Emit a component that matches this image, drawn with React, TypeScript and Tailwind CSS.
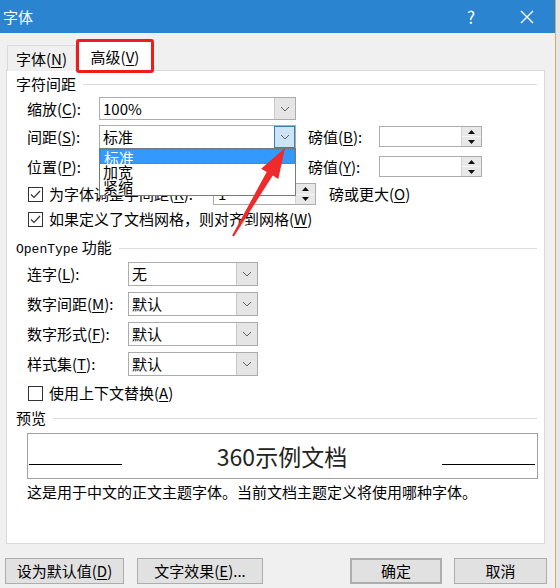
import React from "react";

const FONT = "font-['Noto_Sans_CJK_SC','Noto_Sans',sans-serif]";

function K({ k }: { k: string }) {
  return <span className="underline underline-offset-2">{k}</span>;
}

function Chevron() {
  return (
    <svg width="10" height="6" viewBox="0 0 10 6">
      <polyline points="1,1 5,5 9,1" fill="none" stroke="#606060" strokeWidth="1" />
    </svg>
  );
}

function Combo({ value, className, focus }: { value: string; className: string; focus?: boolean }) {
  return (
    <div className={`flex border border-[#acacac] bg-white ${className}`}>
      <span className="flex-1 pl-[3px] leading-[21px]">{value}</span>
      {focus ? (
        <span className="flex w-[21px] items-center justify-center border border-[#3c7fb1] bg-[#cce4f7]">
          <Chevron />
        </span>
      ) : (
        <span className="flex w-[21px] items-center justify-center border-l border-[#c8c8c8] bg-[#e5e5e5]">
          <Chevron />
        </span>
      )}
    </div>
  );
}

function Spin({ value, className }: { value?: string; className: string }) {
  return (
    <div className={`flex border border-[#acacac] bg-white ${className}`}>
      <span className="flex-1 pl-[4px] leading-[20px]">{value}</span>
      <span className="flex w-[20px] flex-col border-l border-[#d4d4d4] bg-[#e8e8e8]">
        <span className="flex flex-1 items-center justify-center border-b border-[#f8f8f8]">
          <svg width="7" height="4" viewBox="0 0 7 4">
            <polygon points="0,4 3.5,0 7,4" fill="#111" />
          </svg>
        </span>
        <span className="flex flex-1 items-center justify-center">
          <svg width="7" height="4" viewBox="0 0 7 4">
            <polygon points="0,0 7,0 3.5,4" fill="#111" />
          </svg>
        </span>
      </span>
    </div>
  );
}

function Check({ checked }: { checked?: boolean }) {
  return (
    <span className="flex h-[15px] w-[15px] shrink-0 items-center justify-center border border-[#333] bg-white">
      {checked && (
        <svg width="11" height="9" viewBox="0 0 11 9">
          <polyline points="1,4.5 4,7.5 10,1" fill="none" stroke="#333" strokeWidth="1.2" />
        </svg>
      )}
    </span>
  );
}

function Section({ children, className }: { children: React.ReactNode; className: string }) {
  return (
    <div className={`flex h-[20px] items-center pl-[9px] pr-[7px] ${className}`}>
      <span>{children}</span>
      <span className="ml-[7px] h-px flex-1 bg-[#dcdcdc]" />
    </div>
  );
}

function Button({ children, className }: { children: React.ReactNode; className: string }) {
  return (
    <div className={`flex items-center justify-center border border-[#adadad] bg-[#e1e1e1] ${className}`}>
      {children}
    </div>
  );
}

export default function App() {
  return (
    <div className={`relative flex h-[588px] w-[560px] overflow-hidden bg-[#e6e6e6] text-[15px] leading-[20px] text-black ${FONT}`}>
      <div className="h-full w-[556px] border-r border-[#d9aa6a] bg-[#f0f0f0]">
        {/* title bar */}
        <div className="flex h-[33px] items-center bg-[#2b84d0] pl-[3px] pr-[21px] text-white">
          <span>字体</span>
          <span className="ml-auto w-[20px] text-center text-[17px]">?</span>
          <svg className="ml-[39px]" width="14" height="14" viewBox="0 0 14 14">
            <path d="M1 1 L13 13 M13 1 L1 13" stroke="#fff" strokeWidth="1.4" />
          </svg>
        </div>

        {/* tabs */}
        <div className="flex h-[37px] items-end pl-[7px]">
          <div className="-mb-px flex h-[26px] w-[69px] items-center justify-center border border-b-0 border-[#dadada] bg-[#f0f0f0]">
            字体(<K k="N" />)
          </div>
          <div className="relative z-10 -mb-px flex h-[32px] w-[78px] items-center justify-center border border-b-0 border-[#d9d9d9] bg-white pt-[2px]">
            高级(<K k="V" />)
          </div>
        </div>

        {/* panel */}
        <div className="ml-[6px] h-[474px] w-[539px] border border-[#d9d9d9] bg-white pt-[3px]">
          <Section className="">字符间距</Section>

          <div className="mt-[3px] flex h-[23px] items-center pl-[20px]">
            <span className="w-[72px]">缩放(<K k="C" />):</span>
            <Combo value="100%" className="h-[23px] w-[197px]" />
          </div>
          <div className="mt-[5px] flex h-[23px] items-center pl-[20px]">
            <span className="w-[72px]">间距(<K k="S" />):</span>
            <Combo value="标准" focus className="h-[24px] w-[197px]" />
            <span className="ml-[12px] w-[71px]">磅值(<K k="B" />):</span>
            <Spin className="h-[21px] w-[103px]" />
          </div>
          <div className="mt-[7px] flex h-[23px] items-center pl-[20px]">
            <span className="w-[72px]">位置(<K k="P" />):</span>
            <Combo value="标准" className="h-[23px] w-[197px]" />
            <span className="ml-[12px] w-[71px]">磅值(<K k="Y" />):</span>
            <Spin className="h-[21px] w-[103px]" />
          </div>

          <div className="mt-[5px] flex h-[22px] items-center pl-[21px]">
            <Check checked />
            <span className="ml-[6px] w-[164px]">为字体调整字间距(<K k="K" />):</span>
            <Spin value="1" className="h-[22px] w-[103px]" />
            <span className="ml-[13px]">磅或更大(<K k="O" />)</span>
          </div>
          <div className="mt-[3px] flex h-[22px] items-center pl-[21px]">
            <Check checked />
            <span className="ml-[6px]">如果定义了文档网格，则对齐到网格(<K k="W" />)</span>
          </div>

          <Section className="mt-[8px]">
            <span className="font-['Liberation_Mono',monospace] text-[13px]">OpenType</span> 功能
          </Section>

          {[
            ["连字", "L", "无", "mt-[4px]"],
            ["数字间距", "M", "默认", "mt-[6px]"],
            ["数字形式", "F", "默认", "mt-[6px]"],
            ["样式集", "T", "默认", "mt-[6px]"],
          ].map(([label, key, value, mt]) => (
            <div key={key} className={`flex h-[24px] items-center pl-[20px] ${mt}`}>
              <span className="w-[101px]">
                {label}(<K k={key} />):
              </span>
              <Combo value={value} className="h-[24px] w-[130px]" />
            </div>
          ))}

          <div className="mt-[7px] flex h-[20px] items-center pl-[21px]">
            <Check />
            <span className="ml-[6px]">使用上下文替换(<K k="A" />)</span>
          </div>

          <Section className="mt-[5px]">预览</Section>

          <div className="ml-[20px] mt-[5px] flex h-[46px] w-[511px] items-start border border-[#a0a0a0]">
            <span className="ml-[1px] mt-[30px] h-px w-[93px] bg-black" />
            <span className="flex-1 text-center text-[23px] leading-[44px] text-[#222]">360示例文档</span>
            <span className="mr-[2px] mt-[30px] h-px w-[93px] bg-black" />
          </div>
          <div className="ml-[20px] mt-[3px]">这是用于中文的正文主题字体。当前文档主题定义将使用哪种字体。</div>
        </div>

        {/* buttons */}
        <div className="mt-[14px] flex h-[26px]">
          <Button className="ml-[5px] w-[119px]">
            设为默认值(<K k="D" />)
          </Button>
          <Button className="ml-[13px] w-[126px]">
            文字效果(<K k="E" />)...
          </Button>
          <Button className="ml-[87px] w-[92px] border-2 border-[#0078d7]">确定</Button>
          <Button className="ml-[12px] w-[93px]">取消</Button>
        </div>
      </div>
      <div className="h-full flex-1 bg-[#e6e6e6]" />

      {/* open dropdown list */}
      <div className="absolute left-[99px] top-[148px] h-[48px] w-[197px] border border-[#7a7a7a] bg-white leading-[15px]">
        <div className="h-[15px] border border-dotted border-[#b4622a] bg-[#3399ff] pl-[3px] text-white">标准</div>
        <div className="h-[15px] pl-[3px]">加宽</div>
        <div className="h-[15px] pl-[3px]">紧缩</div>
      </div>

      {/* annotations */}
      <div className="pointer-events-none absolute left-[76px] top-[39px] z-20 h-[34px] w-[78px] rounded-[3px] shadow-[inset_0_0_0_3px_#ee1c1c]" />
      <svg className="pointer-events-none absolute left-0 top-0 z-20" width="560" height="588" viewBox="0 0 560 588">
        <polygon
          points="285,148 278.3,178.9 272.7,175.6 233.9,236.5 232.1,235.5 266.7,172 261.1,168.7"
          fill="#ee2a2a"
        />
      </svg>
    </div>
  );
}
